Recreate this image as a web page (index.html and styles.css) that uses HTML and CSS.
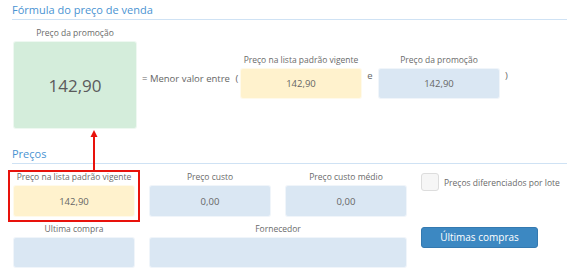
FILE: index.html
```html
<!DOCTYPE html>
<html lang="pt">
<head>
    <meta charset="UTF-8">
    <title>Preço de venda</title>
    <link rel="stylesheet" href="styles.css">
</head>
<body>
    <div class="section formula">
        <h2 class="section-title">Fórmula do preço de venda</h2>
        <div class="formula-row">
            <div class="field promo">
                <label>Preço da promoção</label>
                <div class="box green big">142,90</div>
            </div>
            <div class="op op-main">= Menor valor entre <span class="paren">(</span></div>
            <div class="field small">
                <label>Preço na lista padrão vigente</label>
                <div class="box yellow">142,90</div>
            </div>
            <div class="op op-e">e</div>
            <div class="field small">
                <label>Preço da promoção</label>
                <div class="box blue">142,90</div>
            </div>
            <div class="op op-close">)</div>
        </div>
    </div>

    <div class="section precos">
        <h2 class="section-title">Preços</h2>
        <div class="precos-grid">
            <div class="field">
                <label>Preço na lista padrão vigente</label>
                <div class="box yellow">142,90</div>
                <div class="highlight"></div>
                <svg class="arrow" width="12" height="42" viewBox="0 0 12 42">
                    <line x1="6" y1="6" x2="6" y2="42" stroke="#e8120c" stroke-width="2"/>
                    <polygon points="6,0 2.5,7 9.5,7" fill="#e8120c"/>
                </svg>
            </div>
            <div class="field">
                <label>Preço custo</label>
                <div class="box blue">0,00</div>
            </div>
            <div class="field">
                <label>Preço custo médio</label>
                <div class="box blue">0,00</div>
            </div>
            <div class="check">
                <span class="checkbox"></span>
                <span>Preços diferenciados por lote</span>
            </div>

            <div class="field row2">
                <label>Ultima compra</label>
                <div class="box blue"></div>
            </div>
            <div class="field row2 wide">
                <label>Fornecedor</label>
                <div class="box blue"></div>
            </div>
            <div class="actions">
                <button class="btn">Últimas compras</button>
            </div>
        </div>
    </div>
</body>
</html>
```

FILE: styles.css
```css
body {
    margin: 0;
    background: #ffffff;
    font-family: "Open Sans", "Noto Sans", sans-serif;
    color: #666666;
}

.section {
    padding-left: 12px;
}

.section-title {
    margin: 0;
    font-size: 11px;
    font-weight: normal;
    color: #4a93d2;
    line-height: 14px;
    padding-top: 3px;
    padding-bottom: 2px;
    border-bottom: 1px solid #cfe2f4;
}

.field label {
    display: block;
    text-align: center;
    font-size: 8.5px;
    line-height: 12px;
    color: #6b6b6b;
    white-space: nowrap;
}

.box {
    box-sizing: border-box;
    border: 1px solid rgba(255, 255, 255, 0.6);
    border-radius: 3px;
    display: flex;
    align-items: center;
    justify-content: center;
    font-size: 9.5px;
    color: #666666;
}

.green { background: #d4eddb; }
.yellow { background: #fff2cd; }
.blue { background: #dae7f3; }

/* formula */
.formula-row {
    display: flex;
    align-items: flex-start;
    padding-top: 7px;
}

.promo {
    width: 124px;
    margin-left: 1px;
}

.promo label {
    margin-bottom: 2px;
}

.box.big {
    height: 88px;
    font-size: 17px;
    color: #5b5b5b;
}

.op {
    font-size: 9.5px;
    color: #666666;
    padding-top: 45px;
}

.op-main {
    margin-left: 5px;
    width: 98px;
}

.paren {
    margin-left: 3px;
}

.field.small {
    width: 122px;
    padding-top: 27px;
}

.field.small label {
    margin-bottom: 2px;
}

.field.small .box {
    height: 31px;
}

.op-e {
    width: 16px;
    text-align: center;
    padding-top: 42px;
}

.op-close {
    margin-left: 5px;
    padding-top: 42px;
}

/* precos */
.precos {
    margin-top: 15px;
}

.precos-grid {
    display: grid;
    grid-template-columns: 122px 122px 122px auto;
    column-gap: 14px;
    row-gap: 6px;
    padding-left: 1px;
    padding-top: 7px;
}

.precos-grid .field {
    position: relative;
}

.precos-grid .field label {
    margin-bottom: 2px;
}

.precos-grid .box {
    height: 32px;
}

.precos-grid .row2 .box {
    height: 31px;
}

.wide {
    grid-column: span 2;
}

.highlight {
    position: absolute;
    left: -5px;
    top: -1px;
    right: -5px;
    bottom: -5px;
    border: 2px solid #e8120c;
}

.arrow {
    position: absolute;
    left: 75px;
    top: -41px;
}

.check {
    display: flex;
    align-items: center;
    gap: 5px;
    font-size: 8.5px;
    color: #6b6b6b;
    padding-top: 2px;
    align-self: start;
}

.checkbox {
    width: 16px;
    height: 16px;
    border: 1px solid #dddddd;
    border-radius: 3px;
    background: #f6f6f6;
}

.actions {
    padding-top: 1px;
}

.btn {
    width: 117px;
    height: 21px;
    border: 1px solid #3479b0;
    border-radius: 3px;
    background: #3c88c2;
    color: #ffffff;
    font-family: "Open Sans", "Noto Sans", sans-serif;
    font-size: 10px;
    padding: 0;
    cursor: pointer;
}
```
